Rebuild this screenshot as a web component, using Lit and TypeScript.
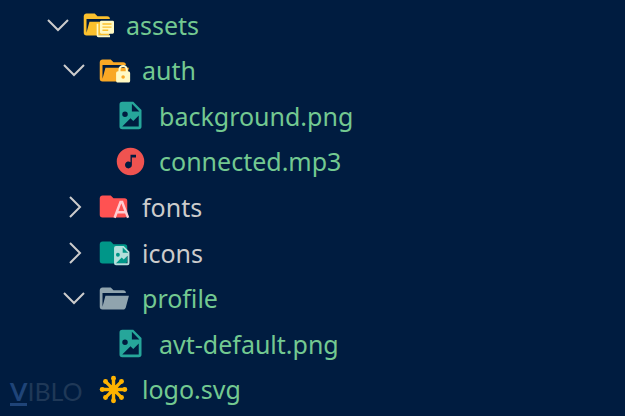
import { LitElement, html, svg, css, nothing } from "lit";
import { customElement, state } from "lit/decorators.js";
import { classMap } from "lit/directives/class-map.js";

type Kind = "assets" | "lock" | "image" | "music" | "fonts" | "icons" | "folder" | "svg";
interface Entry {
  name: string;
  kind: Kind;
  level: 0 | 1 | 2;
  folder?: boolean;
  fresh?: boolean;
}

const ENTRIES: Entry[] = [
  { name: "assets", kind: "assets", level: 0, folder: true, fresh: true },
  { name: "auth", kind: "lock", level: 1, folder: true, fresh: true },
  { name: "background.png", kind: "image", level: 2, fresh: true },
  { name: "connected.mp3", kind: "music", level: 2, fresh: true },
  { name: "fonts", kind: "fonts", level: 1, folder: true },
  { name: "icons", kind: "icons", level: 1, folder: true },
  { name: "profile", kind: "folder", level: 1, folder: true, fresh: true },
  { name: "avt-default.png", kind: "image", level: 2, fresh: true },
  { name: "logo.svg", kind: "svg", level: 1, fresh: true },
];

const OPEN =
  "M19 20H4a2 2 0 0 1-2-2V6c0-1.11.89-2 2-2h6l2 2h7a2 2 0 0 1 2 2H4v10l2.14-8h17.07l-2.28 8.5c-.23.87-1.01 1.5-1.93 1.5z";
const CLOSED =
  "M10 4H4c-1.11 0-2 .89-2 2v12a2 2 0 0 0 2 2h16a2 2 0 0 0 2-2V8a2 2 0 0 0-2-2h-8z";
const PICTURE =
  "M14 2l6 6v12a2 2 0 0 1-2 2H6a2 2 0 0 1-2-2V4a2 2 0 0 1 2-2zm-1 1.5V9h5.5zM6 20h12v-8l-4 4-2-2zM8 9a2 2 0 0 0-2 2 2 2 0 0 0 2 2 2 2 0 0 0 2-2 2 2 0 0 0-2-2z";

const ICONS = {
  assets: svg`<path fill="#fbc02d" d=${OPEN}/>
    <path fill="#fff9c4" d="M11.4 11.5h1.2v8.4h8.5v1.3h-8.5a1.2 1.2 0 0 1-1.2-1.2z"/>
    <path fill="#fff9c4" fill-rule="evenodd" d="M14.8 9.2H23a1 1 0 0 1 1 1v7.5a1 1 0 0 1-1 1h-8.2a1 1 0 0 1-1-1v-7.5a1 1 0 0 1 1-1z"/>
    <path fill="#fbc02d" d="M15.6 11.1h6.6v1h-6.6zm0 2.3h6.6v1h-6.6zm0 2.3h4.2v1h-4.2z"/>`,
  lock: svg`<path fill="#f9a825" d=${OPEN}/>
    <path fill="#fff9c4" fill-rule="evenodd" d="M15.6 12.6v-1.2a3.4 3.4 0 0 1 6.8 0v1.2h.3c.8 0 1.4.6 1.4 1.4v5.4c0 .8-.6 1.4-1.4 1.4h-7.4c-.8 0-1.4-.6-1.4-1.4V14c0-.8.6-1.4 1.4-1.4zm1.5 0h3.8v-1.2a1.9 1.9 0 0 0-3.8 0zM19 15.4a1.3 1.3 0 1 0 0 2.6 1.3 1.3 0 0 0 0-2.6z"/>`,
  image: svg`<path fill="#26a69a" fill-rule="evenodd" d=${PICTURE}/>`,
  music: svg`<path fill="#ef5350" fill-rule="evenodd" d="M12 2a10 10 0 1 1 0 20 10 10 0 0 1 0-20zm4 5h-4v5.5a2.5 2.5 0 1 0 1 2V9h3z"/>`,
  fonts: svg`<path fill="#ff5252" d=${CLOSED}/>
    <path fill="none" stroke="#ffcdd2" stroke-width="1.8" d="M12.8 20.2l4.3-11.4h1.2l4.3 11.4M14.4 16.2h6.6"/>`,
  icons: svg`<path fill="#009688" d=${CLOSED}/>
    <path fill="#b2dfdb" fill-rule="evenodd" transform="translate(9.6 5.9) scale(.7)" d=${PICTURE}/>`,
  folder: svg`<path fill="#90a4ae" d=${OPEN}/>`,
  svg: svg`<g fill="none" stroke="#ffb300" stroke-width="2.5" stroke-linecap="round">
      <path d="M12 3.6v16.8M3.6 12h16.8M6.1 6.1l11.8 11.8M17.9 6.1L6.1 17.9"/></g>
    <g fill="#ffb300"><circle cx="12" cy="12" r="3.4"/>
      <circle cx="12" cy="3.8" r="1.8"/><circle cx="12" cy="20.2" r="1.8"/>
      <circle cx="3.8" cy="12" r="1.8"/><circle cx="20.2" cy="12" r="1.8"/>
      <circle cx="6.2" cy="6.2" r="1.8"/><circle cx="17.8" cy="17.8" r="1.8"/>
      <circle cx="17.8" cy="6.2" r="1.8"/><circle cx="6.2" cy="17.8" r="1.8"/></g>`,
};

@customElement("app-root")
export class AppRoot extends LitElement {
  @state() private open = new Set(["assets", "auth", "profile"]);

  static styles = css`
    :host {
      display: block;
      background: #001c40;
      color: #cccccc;
      font-family: "Segoe UI", "Noto Sans", sans-serif;
    }
    .explorer {
      position: relative;
      box-sizing: border-box;
      min-height: 100vh;
      padding: 2px 0 4px;
      display: grid;
    }
    .tree {
      margin: 0;
      padding: 0;
      list-style: none;
      display: grid;
      grid-template-rows: repeat(9, 1fr);
    }
    .item {
      display: grid;
    }
    .row {
      display: flex;
      align-items: center;
      border: 0;
      padding: 0 16px 0 46px;
      background: none;
      color: inherit;
      font: inherit;
      font-size: 25px;
      line-height: 36px;
      text-align: left;
      cursor: pointer;
    }
    .level-1 {
      padding-left: 62px;
    }
    .level-2 {
      padding-left: 79px;
    }
    .fresh {
      color: #73c991;
    }
    .twist {
      flex: none;
      width: 24px;
      height: 24px;
      margin-right: 11px;
      fill: none;
      stroke: #cccccc;
      stroke-width: 2;
    }
    .icon {
      flex: none;
      width: 33px;
      height: 33px;
      margin-right: 12px;
      overflow: visible;
    }
    .mark {
      position: absolute;
      left: 10px;
      bottom: 10px;
      display: flex;
      align-items: flex-start;
      color: #1f3857;
      font-family: Lato, sans-serif;
      font-size: 25px;
      line-height: 24px;
    }
    .initial {
      color: #1f4478;
      border-bottom: 3px solid;
      font-weight: 700;
    }
  `;

  private toggle(entry: Entry) {
    if (!entry.folder) return;
    const next = new Set(this.open);
    if (!next.delete(entry.name)) next.add(entry.name);
    this.open = next;
  }

  private visible() {
    const shown: Entry[] = [];
    let hiddenBelow = Infinity;
    for (const entry of ENTRIES) {
      if (entry.level > hiddenBelow) continue;
      hiddenBelow = entry.folder && !this.open.has(entry.name) ? entry.level : Infinity;
      shown.push(entry);
    }
    return shown;
  }

  private row(entry: Entry) {
    const open = this.open.has(entry.name);
    return html`<li class="item">
      <button
        class=${classMap({ row: true, [`level-${entry.level}`]: true, fresh: !!entry.fresh })}
        aria-expanded=${entry.folder ? String(open) : nothing}
        @click=${() => this.toggle(entry)}
      >
        <svg class="twist" viewBox="0 0 24 24" aria-hidden="true">
          ${entry.folder ? svg`<path d=${open ? "M2 7l10 10 10-10" : "M8 2l10 10-10 10"}/>` : nothing}
        </svg>
        <svg class="icon" viewBox="0 0 24 24" aria-hidden="true">${ICONS[entry.kind]}</svg>
        <span>${entry.name}</span>
      </button>
    </li>`;
  }

  render() {
    return html`<main class="explorer">
      <ul class="tree">${this.visible().map((entry) => this.row(entry))}</ul>
      <div class="mark"><span class="initial">V</span><span>IBLO</span></div>
    </main>`;
  }
}
